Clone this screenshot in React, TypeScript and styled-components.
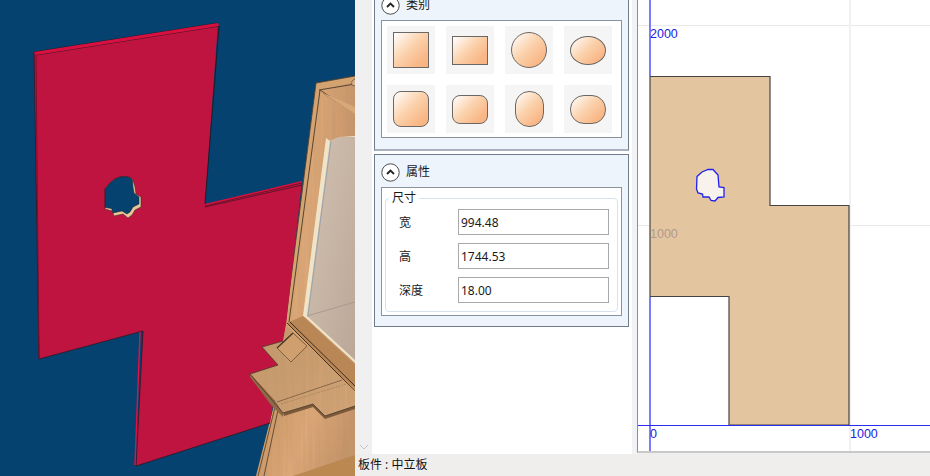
import React from 'react';
import styled, { createGlobalStyle } from 'styled-components';

const GlobalStyle = createGlobalStyle`
    html, body {
        margin: 0;
        padding: 0;
        background: #f0f0f0;
        overflow: hidden;
    }
    * {
        box-sizing: border-box;
    }
`;

const cjkFont = `"Noto Sans", "Noto Sans CJK SC", sans-serif`;

const Root = styled.div`
    display: flex;
    width: 930px;
    height: 476px;
    overflow: hidden;
    font-family: ${cjkFont};
    color: #1a1a1a;
`;

const ModelView = styled.svg`
    display: block;
    flex: 0 0 355px;
    height: 476px;
`;

const Workspace = styled.div`
    flex: 1;
    display: flex;
    flex-direction: column;
    min-width: 0;
`;

const MainArea = styled.div`
    flex: 1;
    display: flex;
    min-height: 0;
`;

const ScrollGutter = styled.div`
    flex: 0 0 17px;
    display: flex;
    align-items: flex-end;
    justify-content: center;
    padding-bottom: 4px;
    background: #f0f0f0;
`;

const Dock = styled.div`
    flex: 0 0 260px;
    background: #fff;
    padding: 0 3px 0 2px;
    overflow: hidden;
`;

const DockSpacer = styled.div`
    flex: 0 0 5px;
    background: #f0f2f5;
`;

const SectionList = styled.div`
    display: flex;
    flex-direction: column;
    gap: 3px;
    margin-top: -13px;
`;

const Section = styled.section<{ $thickBottom?: boolean }>`
    background: #edf4fc;
    border: 1px solid #717d8b;
    border-bottom: ${p => (p.$thickBottom ? '2px solid #aab2c0' : '1px solid #717d8b')};
    padding: 0 6px ${p => (p.$thickBottom ? '11px' : '10px')};
`;

const SectionHeader = styled.div`
    display: flex;
    align-items: center;
    gap: 6px;
    height: 32px;
    padding-top: 3px;
    font-size: 12px;
`;

const SectionTitle = styled.span`
    padding-bottom: 3px;
`;

const InnerBox = styled.div`
    background: #fff;
    border: 1px solid #8a929c;
`;

const ShapeGrid = styled.div`
    display: grid;
    grid-template-columns: repeat(4, 48px);
    gap: 11px;
    padding: 5px;
    height: 116px;
`;

const ShapeTile = styled.button`
    display: flex;
    align-items: center;
    justify-content: center;
    width: 48px;
    height: 48px;
    padding: 0;
    border: none;
    background: #f5f5f5;
`;

const ShapeSwatch = styled.span<{ $w: number; $h: number; $r: string }>`
    display: block;
    width: ${p => p.$w}px;
    height: ${p => p.$h}px;
    border-radius: ${p => p.$r};
    border: 1px solid #6a6764;
    background: linear-gradient(135deg, #fff 0%, #fbd3ae 45%, #f9b888 80%, #f8b27f 100%);
`;

const SizeGroup = styled.fieldset`
    margin: 3px 3px 3px;
    padding: 4px 8px 0 13px;
    height: 121px;
    border: 1px solid #d7e2ee;
    border-radius: 4px;
`;

const SizeLegend = styled.legend`
    margin-left: -10px;
    padding: 0 3px;
    font-size: 12px;
    line-height: 14px;
`;

const FieldRow = styled.label`
    display: flex;
    align-items: center;
    height: 26px;
    margin-bottom: 8px;
    font-size: 12px;
`;

const FieldName = styled.span`
    flex: 0 0 59px;
`;

const FieldInput = styled.input`
    width: 151px;
    height: 26px;
    padding: 0 2px;
    border: 1px solid #a9a9a9;
    border-radius: 0;
    outline: none;
    background: #fff;
    font-family: ${cjkFont};
    font-size: 12px;
    color: #1a1a1a;
`;

const DrawingArea = styled.div`
    flex: 1;
    min-width: 0;
    padding-bottom: 2px;
    background: #f0efee;
`;

const DrawingSvg = styled.svg`
    display: block;
    width: 293px;
    height: 453px;
    background: #fff;
    border-left: 1px solid #909090;
    border-bottom: 2px solid #c8c8c8;
`;

const StatusBar = styled.footer`
    flex: 0 0 21px;
    padding: 1px 3px;
    background: #f0eded;
    font-size: 12px;
    line-height: 20px;
    color: #111;
`;

const CollapseIcon = () => (
    <svg width="19" height="19" viewBox="0 0 19 19" fill="none">
        <circle cx="9.5" cy="9.5" r="8.7" fill="#fff" stroke="#4a4a4a" strokeWidth="1" />
        <path d="M6 11l3.5-3.5L13 11" stroke="#222" strokeWidth="1.8" />
    </svg>
);

const ChevronDown = () => (
    <svg width="10" height="6" viewBox="0 0 10 6" fill="none">
        <path d="M1 1l4 4 4-4" stroke="#c4c4c4" strokeWidth="1" />
    </svg>
);

// the panel seen in perspective, plus the cabinet behind it
const Model = () => (
    <ModelView viewBox="0 0 355 476">
        <defs>
            <linearGradient id="wood" x1="0" y1="0" x2="1" y2="0.25">
                <stop offset="0" stopColor="#c99563" />
                <stop offset="0.55" stopColor="#dfa979" />
                <stop offset="1" stopColor="#c6946a" />
            </linearGradient>
            <linearGradient id="board" x1="0" y1="0" x2="1" y2="1">
                <stop offset="0" stopColor="#c4976a" />
                <stop offset="1" stopColor="#d3a577" />
            </linearGradient>
            <linearGradient id="glass" x1="0" y1="0" x2="1" y2="1">
                <stop offset="0" stopColor="#d2c2b2" />
                <stop offset="1" stopColor="#bba797" />
            </linearGradient>
            {/* faint vertical streaks for the wood faces */}
            <filter id="grain" x="0" y="0" width="100%" height="100%">
                <feTurbulence type="fractalNoise" baseFrequency="0.35 0.012" numOctaves="2" seed="4" result="noise" />
                <feColorMatrix in="noise" type="matrix" values="0 0 0 0 0.45  0 0 0 0 0.28  0 0 0 0 0.14  0 0 0 0.5 -0.12" result="tint" />
                <feComposite in="tint" in2="SourceGraphic" operator="in" result="streaks" />
                <feMerge>
                    <feMergeNode in="SourceGraphic" />
                    <feMergeNode in="streaks" />
                </feMerge>
            </filter>
        </defs>
        <rect width="355" height="476" fill="#05426f" />

        {/* cabinet side */}
        <polygon points="316,83 355,76 355,476 256,476 275,401 285,325" fill="url(#wood)" filter="url(#grain)" />
        <polygon points="316,83 355,76 355,82 320,89 291,325 285,325" fill="#d3a472" />
        <path d="M316,83 L355,76 M319,90 L355,84 M316,83 L285,325 M320,90 L289,322" stroke="#4a3a2a" strokeWidth="0.9" fill="none" />
        <path d="M320,90 L355,113 M323,93 L355,113" stroke="#5a452f" strokeWidth="0.9" fill="none" />
        <polygon points="321,92 355,107 355,114" fill="#d8a878" />
        <path d="M355,79 C352,80 351,83 352,85 L355,86" stroke="#6a5440" strokeWidth="0.8" fill="#d9b08a" />

        {/* glass door */}
        <polygon points="326,138 330,141 340,137 355,136 355,363 306,318 303,316" fill="#f0e4c8" />
        <polygon points="330,141 340,137 355,137 355,360 307,316" fill="url(#glass)" />
        <path d="M331,141 L308,315" stroke="#9aa3ad" strokeWidth="1" />
        <path d="M307,316 L355,302" stroke="#a49689" strokeWidth="0.8" />

        {/* door frame lower diagonal */}
        <polygon points="287,323 303,316 355,365 355,391" fill="#b98655" />
        <path d="M287,323 L355,391 M290,322 L355,386" stroke="#3d2f22" strokeWidth="1" fill="none" />

        {/* lower cabinet */}
        <polygon points="275,403 355,412 355,476 258,476" fill="url(#wood)" filter="url(#grain)" />
        <polygon points="293,476 355,455 355,476" fill="#bb8852" />
        <path d="M276,403 L258,476 M279,405 L264,476" stroke="#5a452f" strokeWidth="0.9" fill="none" />

        {/* the red side panel */}
        <polygon points="34,52 218,23 205,204 302,181 286,325 270,423 136,466 143,331 39,359" fill="#bf1340" />
        <path d="M34,52 L218,23 M36,55 L219,26" stroke="#1d1820" strokeWidth="0.8" fill="none" />
        <path d="M34,52 L39,359 L143,331 L136,466 L270,423" stroke="#2a1a24" strokeWidth="0.8" fill="none" />
        <path d="M36,54 L39,359" stroke="#7a0d2c" strokeWidth="0.9" fill="none" />
        <path d="M140,332 L135,465" stroke="#e01048" strokeWidth="1.4" fill="none" />
        <polygon points="34,52 218,23 219,26 36,55" fill="#d8103f" />
        <path d="M219,26 L205,204" stroke="#1d1820" strokeWidth="0.9" fill="none" />
        <polygon points="205,204 302,181 302,184 206,207" fill="#d8103f" />
        <path d="M205,206 L302,183 M205,207 L302,185" stroke="#1d1820" strokeWidth="0.6" fill="none" />

        {/* cut-out */}
        <path d="M105,189 L110,183 L115,179 L120,177 L125,176.5 L130,177.5 L133,180 L135,187 L136,194 L141,197 L141,207 L135,210 L132,215 L128,218 L123,214 L114,216 L112,211 L105,209 Z" fill="#e8c898" stroke="#2a2024" strokeWidth="0.5" />
        <path d="M105,189 L110,183 L115,179 L120,177 L125,176.5 L130,177.5 L132.5,180 L133,187 L134,193 L139,197 L139,204 L133,207 L130,212 L127,214 L122,211 L113,213 L111.5,208.5 L105,207.5 Z" fill="#05426f" stroke="#1d1820" strokeWidth="0.5" />

        {/* shelf with the stepped front */}
        <polygon points="250,374 278,365 262,347 283,341 286,325 355,391 355,406 325,416 313,404 283,413 275,401" fill="url(#board)" filter="url(#grain)" />
        <polygon points="250,374 275,401 283,413 283,417 271,405 250,377" fill="#8d6a45" />
        <polygon points="283,413 313,404 325,416 355,406 355,409 325,419 313,407 284,416" fill="#7a5a3a" />
        <path d="M250,374 L278,365 L262,347 L283,341 M250,374 L283,413 L313,404 L325,416 L355,406" stroke="#4a3a2a" strokeWidth="0.8" fill="none" />
        <path d="M277,402 L342,380" stroke="#6a4f35" strokeWidth="0.7" fill="none" />
        <path d="M281,404 L346,384" stroke="#9a7850" strokeWidth="0.6" strokeDasharray="2 1" fill="none" />
        <polygon points="277,348 293,333 307,346 291,362" fill="#cf9f6d" stroke="#6a5238" strokeWidth="0.8" />
        <path d="M277,348 L293,333" stroke="#4a3a2a" strokeWidth="1.4" />
    </ModelView>
);

const labelFont = { fontFamily: '"Liberation Sans", sans-serif', fontSize: 12.5 };

// front view of the panel with its axes, viewBox follows page coordinates
const Drawing = () => (
    <DrawingSvg viewBox="638 0 292 451">
        <path d="M638 25.5H930 M638 225.5H930" stroke="#e8e8e8" strokeWidth="1" />
        <path d="M850 0V453" stroke="#f0f0f0" strokeWidth="2" />
        <polygon
            points="650,76.5 770,76.5 770,205.5 849,205.5 849,425 729,425 729,296.5 650,296.5"
            fill="#e3c6a0"
            stroke="#454545"
            strokeWidth="1.2"
        />
        <path
            d="M697,176.5 L702,172 L708,169.5 L713,169.5 L718,175 L719,187 L724,187.5 L724,197 L718,197.5 L715,201 L711,200.5 L709,197 L703,197 L702.5,194 L698,193 L696.5,189 Z"
            fill="#f8f2ec"
            stroke="#2020f0"
            strokeWidth="1.3"
        />
        <path d="M650 0V76 M650 297V453" stroke="#7b7bff" strokeWidth="2" />
        <path d="M638 425.5H650 M729 425.5H930" stroke="#2a2af0" strokeWidth="1.2" />
        <path d="M650 425.5H729" stroke="#2a2af0" strokeWidth="1.2" />
        <text x="650" y="38" fill="#2020e0" style={labelFont}>2000</text>
        <text x="650" y="238" fill="#b3998f" style={labelFont}>1000</text>
        <text x="650" y="438" fill="#2020e0" style={labelFont}>0</text>
        <text x="850" y="438" fill="#2020e0" style={labelFont}>1000</text>
    </DrawingSvg>
);

const swatches = [
    { w: 36, h: 36, r: '0' },
    { w: 36, h: 29, r: '0' },
    { w: 36, h: 36, r: '50%' },
    { w: 36, h: 29, r: '50%' },
    { w: 36, h: 36, r: '8px' },
    { w: 36, h: 29, r: '8px' },
    { w: 29, h: 36, r: '14px' },
    { w: 36, h: 29, r: '14px' },
];

const fields = [
    { name: '宽', value: '994.48' },
    { name: '高', value: '1744.53' },
    { name: '深度', value: '18.00' },
];

export default function App() {
    return (
        <Root>
            <GlobalStyle />
            <Model />
            <Workspace>
                <MainArea>
                    <ScrollGutter>
                        <ChevronDown />
                    </ScrollGutter>
                    <Dock>
                        <SectionList>
                            <Section $thickBottom>
                                <SectionHeader>
                                    <CollapseIcon />
                                    <SectionTitle>类别</SectionTitle>
                                </SectionHeader>
                                <InnerBox>
                                    <ShapeGrid>
                                        {swatches.map((s, i) => (
                                            <ShapeTile key={i}>
                                                <ShapeSwatch $w={s.w} $h={s.h} $r={s.r} />
                                            </ShapeTile>
                                        ))}
                                    </ShapeGrid>
                                </InnerBox>
                            </Section>
                            <Section>
                                <SectionHeader>
                                    <CollapseIcon />
                                    <SectionTitle>属性</SectionTitle>
                                </SectionHeader>
                                <InnerBox>
                                    <SizeGroup>
                                        <SizeLegend>尺寸</SizeLegend>
                                        {fields.map(f => (
                                            <FieldRow key={f.name}>
                                                <FieldName>{f.name}</FieldName>
                                                <FieldInput defaultValue={f.value} />
                                            </FieldRow>
                                        ))}
                                    </SizeGroup>
                                </InnerBox>
                            </Section>
                        </SectionList>
                    </Dock>
                    <DockSpacer />
                    <DrawingArea>
                        <Drawing />
                    </DrawingArea>
                </MainArea>
                <StatusBar>板件 : 中立板</StatusBar>
            </Workspace>
        </Root>
    );
}
